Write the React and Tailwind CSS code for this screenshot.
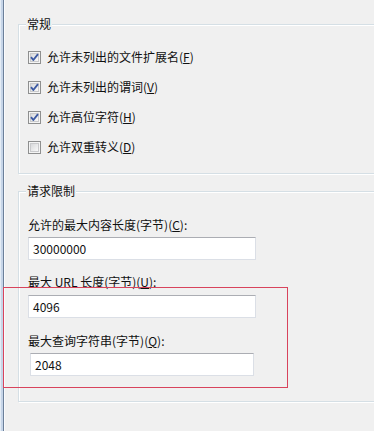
import React from "react";

const FONT = { fontFamily: '"Noto Sans CJK SC", "Noto Sans", sans-serif' };

function Box({ checked }) {
  return (
    <svg width="13" height="13" viewBox="0 0 13 13" className="shrink-0">
      <defs>
        <linearGradient id="cbg" x1="0" y1="0" x2="1" y2="1">
          <stop offset="0" stopColor="#d6d7d9" />
          <stop offset="1" stopColor="#fbfbfb" />
        </linearGradient>
      </defs>
      <rect x="0.5" y="0.5" width="12" height="12" fill="#f4f4f4" stroke="#8e8f8f" />
      <rect x="2.5" y="2.5" width="8" height="8" fill="url(#cbg)" stroke="#c9cacc" />
      {checked && (
        <path d="M3 6.2 L5.3 9 L10 3.2" fill="none" stroke="#3d5aa3" strokeWidth="1.9" strokeLinejoin="round" />
      )}
    </svg>
  );
}

function Key({ k }) {
  return (
    <>
      (<u>{k}</u>)
    </>
  );
}

function CheckRow({ checked, text, k }) {
  return (
    <div className="flex h-[30px] items-center">
      <Box checked={checked} />
      <span className="ml-[6px] text-[12px] leading-[16px] text-[#111]">
        {text}
        <Key k={k} />
      </span>
    </div>
  );
}

function Group({ title, className, children }) {
  return (
    <div className={"relative w-[420px] border border-[#d5dfe5] shadow-[inset_1px_1px_0_#ffffff,1px_1px_0_#ffffff] " + className}>
      <span className="absolute left-[7px] top-[-9px] bg-[#f0f0f0] px-[1px] text-[12px] leading-[16px] text-[#111]">
        {title}
      </span>
      {children}
    </div>
  );
}

function TextBox({ value, className }) {
  return (
    <div
      className={
        "flex h-[23px] items-center border border-[#dbdfe6] border-t-[#abadb3] bg-white pl-[4px] text-[12px] text-[#111] " +
        className
      }
    >
      {value}
    </div>
  );
}

export default function App() {
  return (
    <div className="relative flex h-[431px] w-[374px] overflow-hidden bg-[#f0f0f0]" style={FONT}>
      <div className="w-[5px] shrink-0 bg-[linear-gradient(to_right,#e4ecf5_0,#e4ecf5_1px,#c6d5e8_1px,#c6d5e8_3px,#6b7f99_3px,#6b7f99_4px,#fafbfd_4px)]" />
      <div className="flex flex-col pl-[13px] pt-[24px]">
        <Group title="常规" className="pb-[11px] pl-[9px] pt-[17px]">
          <CheckRow checked text="允许未列出的文件扩展名" k="F" />
          <CheckRow checked text="允许未列出的谓词" k="V" />
          <CheckRow checked text="允许高位字符" k="H" />
          <CheckRow text="允许双重转义" k="D" />
        </Group>

        <Group title="请求限制" className="mt-[17px] pb-[25px] pl-[9px] pt-[25px]">
          <div className="text-[12px] leading-[16px] text-[#111]">
            允许的最大内容长度(字节)<Key k="C" />:
          </div>
          <TextBox value="30000000" className="mt-[4px] w-[228px]" />
          <div className="mt-[14px] text-[12px] leading-[16px] text-[#111]">
            最大 URL 长度(字节)<Key k="U" />:
          </div>
          <TextBox value="4096" className="mt-[5px] w-[228px]" />
          <div className="mt-[15px] text-[12px] leading-[16px] text-[#111]">
            最大查询字符串(字节)<Key k="Q" />:
          </div>
          <TextBox value="2048" className="ml-[2px] mt-[4px] w-[224px]" />
        </Group>
      </div>

      <div className="pointer-events-none absolute left-[3px] top-[287px] h-[101px] w-[285px] shadow-[inset_0_0_0_1px_#d8435c]" />
    </div>
  );
}
